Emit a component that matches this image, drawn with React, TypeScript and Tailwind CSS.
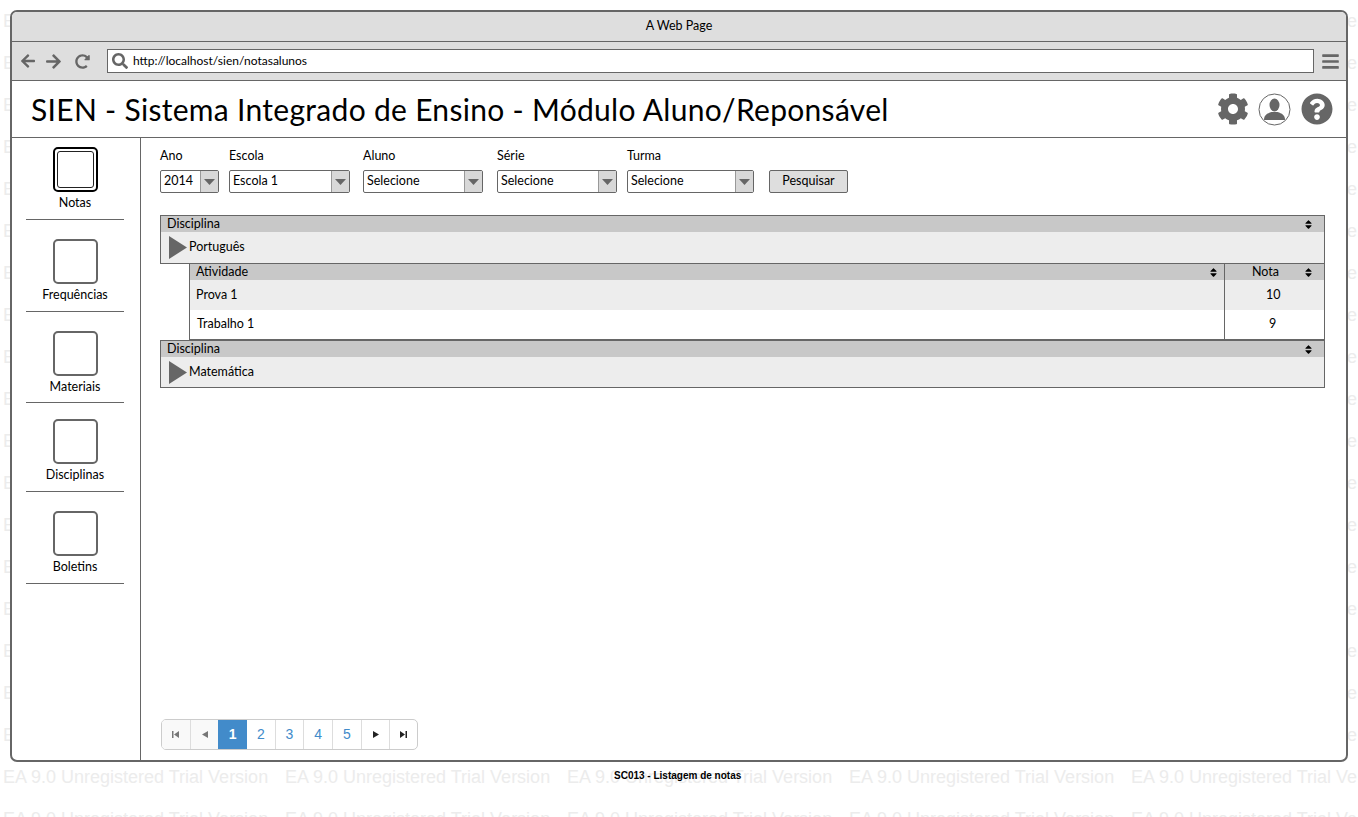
import { FaArrowLeft, FaArrowRight, FaBars, FaCog, FaQuestionCircle, FaRedoAlt, FaSearch, FaSort } from "react-icons/fa";

const font = "font-['Lato','Liberation_Sans',sans-serif]";

const menu = [
  { label: "Notas", box: "mt-[9px]", gap: "mt-[3px]", line: "mt-[8px]", active: true },
  { label: "Frequências", box: "mt-[19px]", gap: "mt-[3px]", line: "mt-[8px]" },
  { label: "Materiais", box: "mt-[19px]", gap: "mt-[3px]", line: "mt-[7px]" },
  { label: "Disciplinas", box: "mt-[16px]", gap: "mt-[3px]", line: "mt-[8px]" },
  { label: "Boletins", box: "mt-[19px]", gap: "mt-[3px]", line: "mt-[8px]" },
];

const filters = [
  { label: "Ano", value: "2014", cls: "w-[59px]" },
  { label: "Escola", value: "Escola 1", cls: "w-[121px] ml-[10px]" },
  { label: "Aluno", value: "Selecione", cls: "w-[120px] ml-[13px]" },
  { label: "Série", value: "Selecione", cls: "w-[120px] ml-[14px]" },
  { label: "Turma", value: "Selecione", cls: "w-[127px] ml-[10px]" },
];

function Watermark() {
  const rows = Array.from({ length: 20 });
  const cols = Array.from({ length: 5 });
  return (
    <div className="absolute inset-0 overflow-hidden pl-[3px] font-['Liberation_Sans',sans-serif] text-[18px] leading-[42px] text-[#ececec]">
      {rows.map((_, r) => (
        <div key={r} className="flex h-[42px] whitespace-nowrap">
          {cols.map((_, c) => (
            <span key={c} className="w-[282px] shrink-0">
              EA 9.0 Unregistered Trial Version
            </span>
          ))}
        </div>
      ))}
    </div>
  );
}

function UserIcon() {
  return (
    <svg width="33" height="33" viewBox="0 0 33 33">
      <circle cx="16.5" cy="16.5" r="15.5" fill="#fff" stroke="#666" strokeWidth="1" />
      <ellipse cx="16.5" cy="12" rx="5" ry="6.5" fill="#666" />
      <path d="M6 27c0-5 3-6.5 7.5-8h6c4.500 1.500 7.500 3 7.500 8z" fill="#666" />
    </svg>
  );
}

function Select({ value, cls }: { value: string; cls: string }) {
  return (
    <div className={`flex h-[23px] items-stretch rounded-[2px] border border-[#666] bg-white ${cls}`}>
      <span className="flex-1 truncate pl-[3px] text-[12.5px] leading-[19px]">{value}</span>
      <span className="flex w-[18px] items-center justify-center border-l border-[#999] bg-[#d8d8d8]">
        <svg width="11" height="6" viewBox="0 0 11 6">
          <path d="M0 0h11L5.500 6z" fill="#666" />
        </svg>
      </span>
    </div>
  );
}

function Play() {
  return (
    <svg width="18" height="23" viewBox="0 0 18 23" className="shrink-0">
      <path d="M0 0l18 11.500L0 23z" fill="#666" />
    </svg>
  );
}

function Head({ label, cls }: { label: string; cls: string }) {
  return (
    <div className={`flex items-center justify-between bg-[#c8c8c8] text-[12.5px] ${cls}`}>
      <span>{label}</span>
      <FaSort className="h-[11px] w-[11px] text-black" />
    </div>
  );
}

function Panel({ name, rowCls }: { name: string; rowCls: string }) {
  return (
    <div className="border border-[#666]">
      <Head label="Disciplina" cls="h-[16px] pl-[6px] pr-[10px]" />
      <div className={`flex items-center bg-[#ededed] pl-[8px] text-[12.5px] ${rowCls}`}>
        <Play />
        <span className="ml-[2px]">{name}</span>
      </div>
    </div>
  );
}

function PageCell({ children, cls = "" }: { children: React.ReactNode; cls?: string }) {
  return (
    <div className={`flex h-[29px] items-center justify-center border-l border-[#ddd] first:border-l-0 ${cls}`}>
      {children}
    </div>
  );
}

function Pagination() {
  const nums = ["2", "3", "4", "5"];
  return (
    <div className="mt-auto ml-px flex w-[257px] overflow-hidden rounded-[5px] border border-[#ccc] bg-white font-['Liberation_Sans',sans-serif] text-[14px]">
      <PageCell cls="w-[28px] bg-[#f9f9f9]">
        <svg width="7" height="7" viewBox="0 0 7 7"><path d="M0 0h1.500v7H0zM7 0v7L2 3.500z" fill="#777" /></svg>
      </PageCell>
      <PageCell cls="w-[29px] bg-[#f9f9f9]">
        <svg width="6" height="7" viewBox="0 0 6 7"><path d="M6 0v7L0 3.500z" fill="#777" /></svg>
      </PageCell>
      <div className="flex h-[29px] w-[29px] items-center justify-center bg-[#428bca] font-bold text-white">1</div>
      {nums.map((n, i) => (
        <PageCell key={n} cls={i === 0 ? "w-[28px] text-[#428bca] border-l-0" : "w-[29px] text-[#428bca]"}>
          {n}
        </PageCell>
      ))}
      <PageCell cls="w-[29px]">
        <svg width="6" height="7" viewBox="0 0 6 7"><path d="M0 0v7l6-3.500z" fill="#222" /></svg>
      </PageCell>
      <PageCell cls="w-[28px]">
        <svg width="7" height="7" viewBox="0 0 7 7"><path d="M7 0H5.500v7H7zM0 0v7l5-3.500z" fill="#222" /></svg>
      </PageCell>
    </div>
  );
}

export default function App() {
  return (
    <div className={`relative h-[817px] w-[1358px] overflow-hidden bg-white pt-[10px] pl-[10px] text-black ${font}`}>
      <Watermark />

      <div className="relative flex h-[752px] w-[1338px] flex-col overflow-hidden rounded-[7px] border-2 border-[#666] bg-white">
        <div className="flex h-[30px] shrink-0 items-center justify-center border-b border-[#666] bg-[#dedede] pb-px text-[12.5px]">
          A Web Page
        </div>

        <div className="flex h-[39px] shrink-0 items-center border-b border-[#666] bg-[#dedede] text-[#666]">
          <FaArrowLeft className="ml-[8px] h-[16px] w-[16px]" />
          <FaArrowRight className="ml-[9px] h-[17px] w-[17px]" />
          <FaRedoAlt className="ml-[13px] h-[15px] w-[15px]" />
          <div className="ml-[17px] flex h-[24px] w-[1207px] items-center border border-[#666] bg-white">
            <FaSearch className="ml-[4px] h-[16px] w-[16px]" />
            <span className="ml-[5px] text-[12px] text-black">http://localhost/sien/notasalunos</span>
          </div>
          <FaBars className="ml-[8px] h-[19px] w-[17px]" />
        </div>

        <div className="flex h-[57px] shrink-0 items-center border-b border-[#666] pl-[19px]">
          <h1 className="text-[30px] leading-none tracking-[0.3px]">
            SIEN - Sistema Integrado de Ensino - Módulo Aluno/Reponsável
          </h1>
          <div className="ml-auto flex items-center pr-[13px] text-[#666]">
            <FaCog className="h-[32px] w-[32px]" />
            <span className="ml-[9px] flex"><UserIcon /></span>
            <FaQuestionCircle className="ml-[10px] h-[32px] w-[32px]" />
          </div>
        </div>

        <div className="flex min-h-0 flex-1">
          <aside className="flex w-[129px] shrink-0 flex-col items-center border-r border-[#666] pl-[3px] pr-[5px]">
            {menu.map((m) => (
              <div key={m.label} className="flex w-[98px] flex-col items-center">
                {m.active ? (
                  <div className={`flex h-[45px] w-[45px] items-center justify-center rounded-[5px] border-[2.500px] border-black ${m.box}`}>
                    <div className="h-[37px] w-[37px] rounded-[3px] border border-[#222]" />
                  </div>
                ) : (
                  <div className={`h-[45px] w-[45px] rounded-[5px] border-2 border-[#666] ${m.box}`} />
                )}
                <div className={`text-[12.5px] leading-[16px] ${m.gap}`}>{m.label}</div>
                <div className={`h-px w-full bg-[#666] ${m.line}`} />
              </div>
            ))}
          </aside>

          <main className="flex min-w-0 flex-1 flex-col pt-[10px] pr-[21px] pb-[10px] pl-[19px]">
            <div className="flex items-end">
              {filters.map((f) => (
                <div key={f.label} className={f.cls}>
                  <div className="mb-[6px] text-[12.5px] leading-[16px]">{f.label}</div>
                  <Select value={f.value} cls="w-full" />
                </div>
              ))}
              <div className="ml-[15px] flex h-[23px] w-[79px] items-center justify-center rounded-[2px] border border-[#666] bg-[#dedede] text-[12.5px]">
                Pesquisar
              </div>
            </div>

            <div className="mt-[22px]">
              <Panel name="Português" rowCls="h-[31px]" />
              <div className="ml-[29px] border-x border-b border-[#666]">
                <div className="flex">
                  <div className="min-w-0 flex-1 border-r border-[#666]">
                    <Head label="Atividade" cls="h-[16px] pl-[6px] pr-[5px]" />
                    <div className="flex h-[30px] items-center bg-[#ededed] pl-[6px] text-[12.5px]">Prova 1</div>
                    <div className="flex h-[29px] items-center pl-[7px] text-[12.5px]">Trabalho 1</div>
                  </div>
                  <div className="w-[99px] shrink-0">
                    <Head label="Nota" cls="h-[16px] pl-[27px] pr-[10px]" />
                    <div className="flex h-[30px] items-center bg-[#ededed] pl-[41px] text-[12.5px]">10</div>
                    <div className="flex h-[29px] items-center pl-[44px] text-[12.5px]">9</div>
                  </div>
                </div>
              </div>
              <Panel name="Matemática" rowCls="h-[30px]" />
            </div>

            <Pagination />
          </main>
        </div>
      </div>

      <div className="relative mt-[8px] ml-[604px] font-['Liberation_Sans',sans-serif] text-[10px] font-bold leading-[12px]">
        SC013 - Listagem de notas
      </div>
    </div>
  );
}
